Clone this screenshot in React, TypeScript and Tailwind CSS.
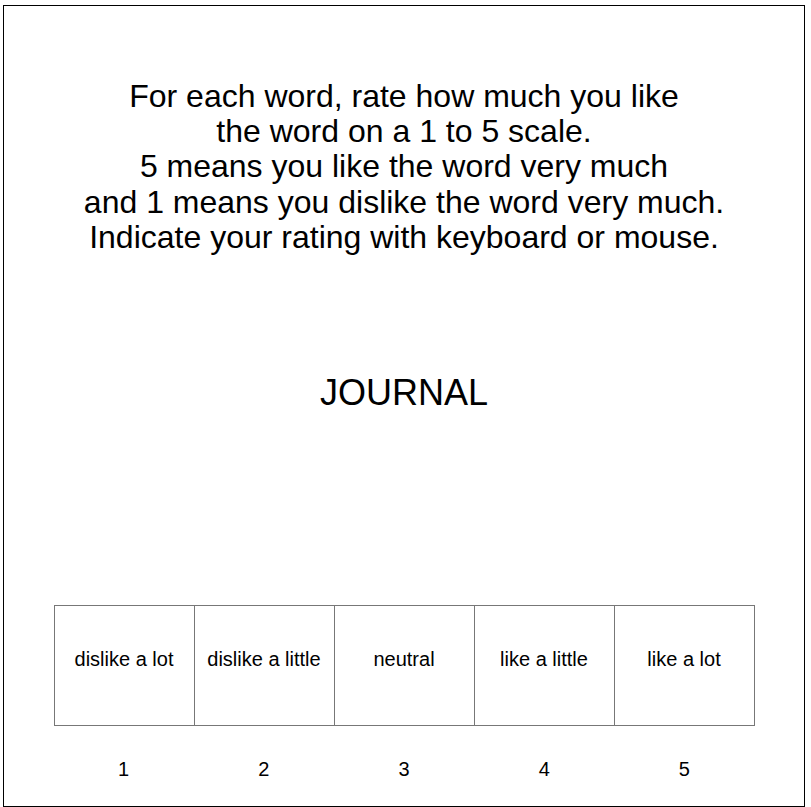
import React from 'react';

const choices = [
  { label: 'dislike a lot', key: 1 },
  { label: 'dislike a little', key: 2 },
  { label: 'neutral', key: 3 },
  { label: 'like a little', key: 4 },
  { label: 'like a lot', key: 5 },
];

export default function App() {
  return (
    <div className="ml-[3px] mt-[5px] w-[802px] h-[802px] border border-black flex flex-col items-center text-black font-['Liberation_Sans',Arial,sans-serif]">
      <div className="mt-[73px] text-[32px] leading-[1.1] text-center">
        For each word, rate how much you like
        <br />
        the word on a 1 to 5 scale.
        <br />
        5 means you like the word very much
        <br />
        and 1 means you dislike the word very much.
        <br />
        Indicate your rating with keyboard or mouse.
      </div>

      <div className="mt-[111px] text-[36px]">JOURNAL</div>

      <div className="mt-[185px] grid grid-cols-5 gap-px p-px bg-[#777777]">
        {choices.map((c) => (
          <div key={c.key} className="w-[139px] h-[119px] bg-white pt-[38px] text-center text-[20px]">
            {c.label}
          </div>
        ))}
      </div>

      <div className="mt-[28px] grid grid-cols-5 w-[701px]">
        {choices.map((c) => (
          <div key={c.key} className="text-center text-[20px]">
            {c.key}
          </div>
        ))}
      </div>
    </div>
  );
}
